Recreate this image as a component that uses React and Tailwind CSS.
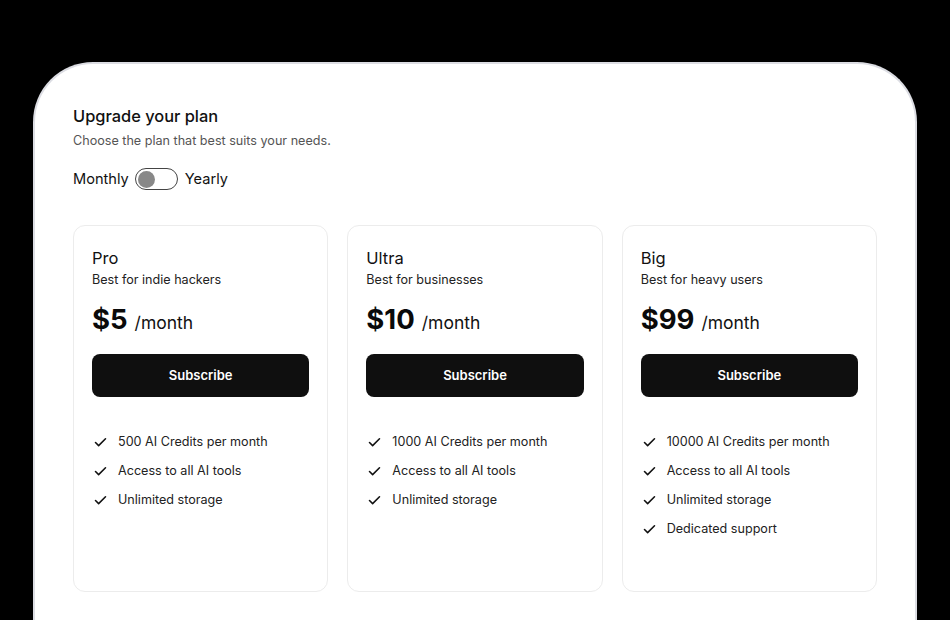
import { useState } from "react";
import { Check } from "lucide-react";

const plans = [
  {
    name: "Pro",
    desc: "Best for indie hackers",
    price: "$5",
    features: ["500 AI Credits per month", "Access to all AI tools", "Unlimited storage"],
  },
  {
    name: "Ultra",
    desc: "Best for businesses",
    price: "$10",
    features: ["1000 AI Credits per month", "Access to all AI tools", "Unlimited storage"],
  },
  {
    name: "Big",
    desc: "Best for heavy users",
    price: "$99",
    features: [
      "10000 AI Credits per month",
      "Access to all AI tools",
      "Unlimited storage",
      "Dedicated support",
    ],
  },
];

const PlanCard = ({ plan }) => (
  <div className="flex flex-col rounded-xl border border-[#ececec] px-[18px] pt-[20px] pb-[52px]">
    <div className="text-[16.5px] leading-6 text-[#111]">{plan.name}</div>
    <div className="text-[12.6px] leading-5 text-[#222]">{plan.desc}</div>
    <div className="mt-[11px] flex items-baseline gap-[7px] leading-9">
      <span className="text-[27.5px] font-bold text-[#0a0a0a]">{plan.price}</span>
      <span className="text-[17.5px] text-[#111]">/month</span>
    </div>
    <button className="mt-[13px] h-[43px] w-full rounded-lg bg-[#0f0f0f] text-[13px] font-semibold text-white">
      Subscribe
    </button>
    <ul className="mt-[35px] flex flex-col gap-[9px]">
      {plan.features.map((f) => (
        <li key={f} className="flex items-center gap-[10px] text-[12.6px] leading-5 text-[#222]">
          <Check size={15} strokeWidth={2.5} className="ml-[1px] text-[#111]" />
          {f}
        </li>
      ))}
    </ul>
  </div>
);

const App = () => {
  const [yearly, setYearly] = useState(false);

  return (
    <div
      className="h-[620px] w-[950px] overflow-hidden bg-black pt-[62px] pl-[33px]"
      style={{ fontFamily: "Inter, 'Noto Sans', sans-serif" }}
    >
      <div className="h-[600px] w-[884px] rounded-t-[60px] border-2 border-b-0 border-[#dcdde3] bg-white px-[38px] pt-[40px]">
        <div className="text-[16.4px] font-medium leading-6 text-[#111]">Upgrade your plan</div>
        <div className="mt-[3px] text-[12.6px] leading-5 text-[#555]">
          Choose the plan that best suits your needs.
        </div>
        <div className="mt-[17px] flex items-center gap-[6px] text-[14.6px] leading-[22px] text-[#111]">
          <span>Monthly</span>
          <button
            onClick={() => setYearly(!yearly)}
            className="flex h-[22px] w-[43px] items-center rounded-full border border-[#444] bg-white px-[2px]"
          >
            <span
              className={
                yearly
                  ? "ml-auto h-[17px] w-[17px] rounded-full bg-[#888]"
                  : "h-[17px] w-[17px] rounded-full bg-[#888]"
              }
            />
          </button>
          <span className="ml-[1px]">Yearly</span>
        </div>
        <div className="mt-[35px] grid grid-cols-3 gap-[19px]">
          {plans.map((p) => (
            <PlanCard key={p.name} plan={p} />
          ))}
        </div>
      </div>
    </div>
  );
};

export default App;
